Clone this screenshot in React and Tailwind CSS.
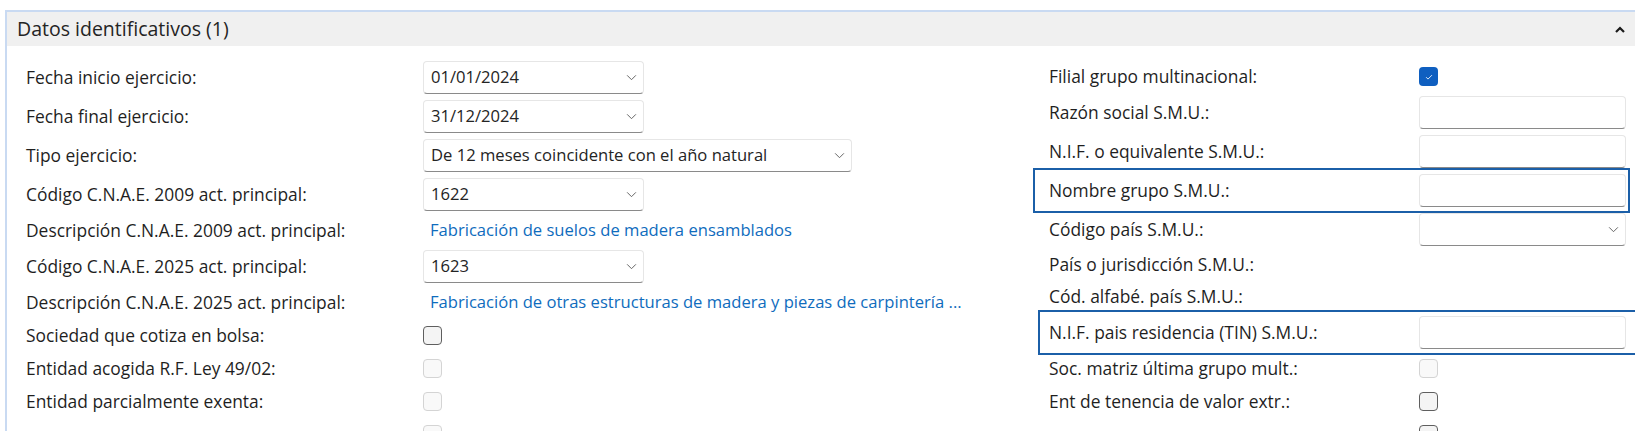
import { useState } from 'react';

const FONT = { fontFamily: '"Open Sans", "Noto Sans", sans-serif' };

function Chevron({ className = '' }) {
  return (
    <svg viewBox="0 0 12 8" className={`w-[11px] h-[7px] ${className}`} fill="none">
      <path d="M1 1.5l5 5 5-5" stroke="#616161" strokeWidth="1.1" />
    </svg>
  );
}

function Select({ value, width }) {
  return (
    <div className={`${width} h-[33px] flex items-center justify-between bg-white border border-[#e6e6e6] border-b-[#8a8a8a] rounded-[4px] pl-[7px] pr-[6px] text-[16.6px] text-[#242424]`}>
      <span>{value}</span>
      <Chevron />
    </div>
  );
}

function TextBox() {
  return <div className="w-[207px] h-[33px] bg-white border border-[#e6e6e6] border-b-[#8a8a8a] rounded-[4px]" />;
}

function Check({ state }) {
  if (state === 'on') {
    return (
      <div className="w-[19px] h-[19px] rounded-[4px] bg-[#0f5fc0] flex items-center justify-center">
        <svg viewBox="0 0 12 12" className="w-[10px] h-[10px]" fill="none">
          <path d="M2.5 6.2l2.3 2.3 4.8-4.8" stroke="white" strokeWidth="1" />
        </svg>
      </div>
    );
  }
  if (state === 'disabled') {
    return <div className="w-[19px] h-[19px] rounded-[4px] bg-[#f9f9f9] border border-[#d4d4d4]" />;
  }
  return <div className="w-[19px] h-[19px] rounded-[4px] bg-[#f4f4f4] border-[1.5px] border-[#5f5f5f]" />;
}

function Field({ item }) {
  if (item.type === 'select') return <Select value={item.value} width={item.width} />;
  if (item.type === 'text') return <TextBox />;
  if (item.type === 'link') return <span className="pl-[7px] text-[16.6px] text-[#0f6cbd]">{item.value}</span>;
  if (item.type === 'check') return <Check state={item.state} />;
  return null;
}

const rowHeight = { select: 'h-[39px]', text: 'h-[39px]', check: 'h-[33px]' };

const leftRows = [
  { label: 'Fecha inicio ejercicio:', type: 'select', value: '01/01/2024', width: 'w-[221px]' },
  { label: 'Fecha final ejercicio:', type: 'select', value: '31/12/2024', width: 'w-[221px]' },
  { label: 'Tipo ejercicio:', type: 'select', value: 'De 12 meses coincidente con el año natural', width: 'w-[429px]' },
  { label: 'Código C.N.A.E. 2009 act. principal:', type: 'select', value: '1622', width: 'w-[221px]' },
  { label: 'Descripción C.N.A.E. 2009 act. principal:', type: 'link', value: 'Fabricación de suelos de madera ensamblados' },
  { label: 'Código C.N.A.E. 2025 act. principal:', type: 'select', value: '1623', width: 'w-[221px]' },
  { label: 'Descripción C.N.A.E. 2025 act. principal:', type: 'link', value: 'Fabricación de otras estructuras de madera y piezas de carpintería ...' },
  { label: 'Sociedad que cotiza en bolsa:', type: 'check', state: 'off' },
  { label: 'Entidad acogida R.F. Ley 49/02:', type: 'check', state: 'disabled' },
  { label: 'Entidad parcialmente exenta:', type: 'check', state: 'disabled' },
  { label: '', type: 'check', state: 'disabled' },
];

const rightRows = [
  { label: 'Filial grupo multinacional:', type: 'check', state: 'on' },
  { label: 'Razón social S.M.U.:', type: 'text' },
  { label: 'N.I.F. o equivalente S.M.U.:', type: 'text' },
  { label: 'Nombre grupo S.M.U.:', type: 'text', focus: 'box' },
  { label: 'Código país S.M.U.:', type: 'select', value: '', width: 'w-[207px]' },
  { label: 'País o jurisdicción S.M.U.:', type: 'none' },
  { label: 'Cód. alfabé. país S.M.U.:', type: 'none' },
  { label: 'N.I.F. pais residencia (TIN) S.M.U.:', type: 'text', focus: 'wide' },
  { label: 'Soc. matriz última grupo mult.:', type: 'check', state: 'disabled' },
  { label: 'Ent de tenencia de valor extr.:', type: 'check', state: 'off' },
  { label: '', type: 'check', state: 'off' },
];

function Row({ item, labelWidth, labelPad, textRow }) {
  let focus = '';
  let width = labelWidth;
  let pad = labelPad;
  if (item.focus === 'box') focus = 'outline-2 outline-[#1b5fa8] outline-offset-[1px]';
  if (item.focus === 'wide') {
    focus = 'outline-2 outline-[#1b5fa8] outline-offset-[1px] ml-[5px] mr-[-20px]';
    width = 'w-[378px]';
    pad = 'pl-[8px]';
  }
  const h = rowHeight[item.type] || textRow;
  return (
    <div className={`flex items-center ${h} ${focus}`}>
      <div className={`${width} ${pad} shrink-0 text-[17.4px] text-[#1f1f1f]`}>{item.label}</div>
      <Field item={item} />
    </div>
  );
}

export default function App() {
  const [open] = useState(true);

  return (
    <div className="h-[431px] overflow-hidden bg-white leading-none" style={FONT}>
      <div className="mt-[10px] ml-[5px] w-[1630px] border-t-2 border-l-2 border-[#c9daf2] overflow-hidden">
        <div className="h-[34px] bg-[#f0f0f0] flex items-center justify-between pl-[10px] pr-[10px]">
          <span className="text-[19.5px] text-[#242424]">Datos identificativos (1)</span>
          <svg viewBox="0 0 10 7" className="w-[10px] h-[7px]">
            <path d="M1 6L5 2l4 4" stroke="#1a1a1a" strokeWidth="2.2" fill="none" />
          </svg>
        </div>
        {open && (
          <div className="flex pt-[14px] pl-[15px]">
            <div className="w-[1014px] shrink-0 flex flex-col mt-[-2px]">
              {leftRows.map((r, i) => (
                <Row key={i} item={r} labelWidth="w-[401px]" labelPad="pl-[4px]" textRow="h-[33px]" />
              ))}
            </div>
            <div className="w-[591px] shrink-0 flex flex-col">
              {rightRows.map((r, i) => (
                <Row key={i} item={r} labelWidth="w-[383px]" labelPad="pl-[13px]" textRow="h-[32px]" />
              ))}
            </div>
          </div>
        )}
      </div>
    </div>
  );
}
